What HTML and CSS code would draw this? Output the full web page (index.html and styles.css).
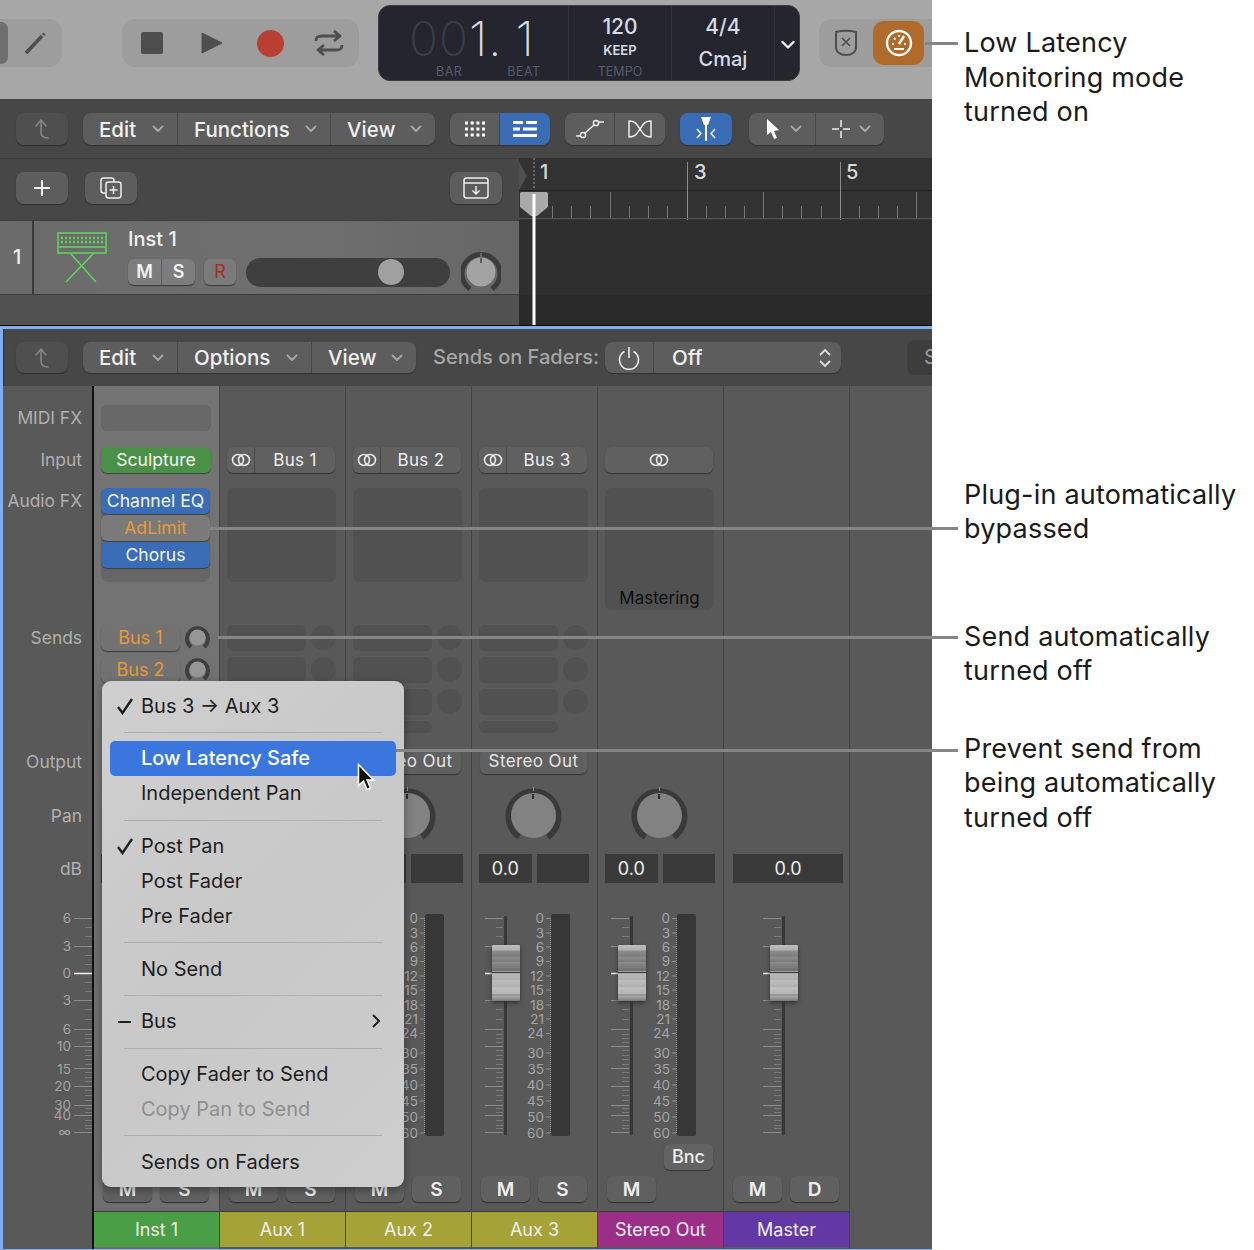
FILE: index.html
```html
<!DOCTYPE html>
<html>
	<head>
		<meta charset="UTF-8">
		<title>Low Latency Monitoring</title>
		<link rel="stylesheet" href="styles.css">
	</head>
	<body>
		<svg class="defs" width="0" height="0">
			<symbol id="chev" viewBox="0 0 12 8"><path d="M1.5 1.5 6 6l4.500-4.500" fill="none" stroke="currentColor" stroke-width="1.800" stroke-linecap="round" stroke-linejoin="round"/></symbol>
			<symbol id="back" viewBox="0 0 20 24"><path d="M4 9 9 3l5 6M9 3v12c0 4 3 6 7 6" fill="none" stroke="currentColor" stroke-width="1.600" stroke-linecap="round" stroke-linejoin="round"/></symbol>
			<symbol id="link" viewBox="0 0 20 14"><circle cx="7" cy="7" r="5.500" fill="none" stroke="currentColor" stroke-width="1.500"/><circle cx="13" cy="7" r="5.500" fill="none" stroke="currentColor" stroke-width="1.500"/></symbol>
			<symbol id="knob" viewBox="0 0 57 57"><path d="M14.200 50A25 25 0 1 1 42.800 50" fill="none" stroke="#3a3a3a" stroke-width="6"/><circle cx="28.500" cy="28.500" r="22.500" fill="#828282"/><path d="M28.500 0v4" stroke="#5fb35f" stroke-width="1"/><path d="M28 7v5" stroke="#111" stroke-width="1.500"/></symbol>
			<symbol id="sendknob" viewBox="0 0 25 25"><path d="M6 22A10.500 10.500 0 1 1 19 22" fill="none" stroke="#3f3f3f" stroke-width="4"/><circle cx="12.500" cy="12.500" r="8" fill="#969696"/></symbol>
			<symbol id="ticks" viewBox="0 0 18 225">
				<path d="M0 4.500h18M0 32.500h18M0 86.500h18M0 115.500h18M0 132.500h18M0 154.500h18M0 172.500h18M0 191.500h18M0 201.500h18M0 218.500h18" stroke="#8c8c8c" fill="none"/>
				<path d="M0 59.500h18" stroke="#f2f2f2" stroke-width="1.500" fill="none"/>
				<path d="M11 13.500h7M11 22.500h7M11 41.500h7M11 50.500h7M11 68.500h7M11 77.500h7M11 95.500h7M11 105.500h7M11 120.500h7M11 124.500h7M11 128.500h7M11 136.500h7M11 141.500h7M11 145.500h7M11 150.500h7M11 158.500h7M11 163.500h7M11 167.500h7M11 176.500h7M11 181.500h7M11 186.500h7M11 194.500h7M11 198.500h7M11 206.500h7M11 211.500h7M11 214.500h7" stroke="#7a7a7a" fill="none"/>
			</symbol>
			<symbol id="check" viewBox="0 0 18 18"><path d="M2 10l4.500 6L16 2" fill="none" stroke="#1e1e1e" stroke-width="2.400"/></symbol>
		</svg>

		<div class="shot">
			<div class="app">
				<!-- transport -->
				<div class="transport">
					<div class="tgroup tools">
						<div class="tool-on"></div>
						<svg class="pencil" width="24" height="24" viewBox="0 0 24 24"><path d="M3 22 19 5" stroke="#4e4e4e" stroke-width="3.500" fill="none"/><path d="M20 4l1.500-1.500" stroke="#4e4e4e" stroke-width="3" fill="none"/></svg>
					</div>
					<div class="tgroup controls">
						<div class="stop"></div>
						<svg class="play" width="22" height="24" viewBox="0 0 22 24"><path d="M1 2v20l20-10z" fill="#4e4e4e" stroke="#4e4e4e" stroke-linejoin="round"/></svg>
						<div class="rec"></div>
						<svg class="loop" width="30" height="26" viewBox="0 0 30 26"><path d="M2 11c0-4 2-5 6-5h16M20 1l6 5-6 5M28 15c0 4-2 5-6 5H6M10 15l-6 5 6 5" fill="none" stroke="#4e4e4e" stroke-width="2.800" stroke-linejoin="round"/></svg>
					</div>
					<div class="lcd">
						<div class="lcd-pos">
							<div class="digits"><span class="dim">00</span><span>1.</span><span class="beat">1</span></div>
							<div class="lcd-labels"><span>BAR</span><span>BEAT</span></div>
						</div>
						<div class="lcd-tempo">
							<span class="big">120</span>
							<span class="keep">KEEP</span>
							<span class="cap-label">TEMPO</span>
						</div>
						<div class="lcd-sign">
							<span class="big">4/4</span>
							<span class="key">Cmaj</span>
						</div>
						<svg class="lcd-chev" width="16" height="10"><use href="#chev"/></svg>
					</div>
					<div class="tgroup modes">
						<svg class="shield" width="26" height="28" viewBox="0 0 26 28"><path d="M3 3c6-1.500 14-1.500 20 0v15c0 5-4 8-10 8S3 23 3 18z" fill="none" stroke="#4e4e4e" stroke-width="2"/><path d="M9 9l8 8M17 9l-8 8" stroke="#4e4e4e" stroke-width="1.600"/></svg>
						<div class="gauge-btn">
							<svg width="28" height="28" viewBox="0 0 28 28"><circle cx="14" cy="14" r="12" fill="none" stroke="#fff" stroke-width="2.400"/><path d="M14 15 19 7" stroke="#fff" stroke-width="2.400"/><path d="M7 15h2M9 9l1.500 1.500M14 6v2M21 15h-2M9 20h10" stroke="#fff" stroke-width="1.800"/></svg>
						</div>
					</div>
				</div>

				<!-- tracks toolbar -->
				<div class="toolbar">
					<div class="btn ghost w52"><svg width="20" height="24"><use href="#back"/></svg></div>
					<div class="seg">
						<div class="seg-item w95">Edit<svg class="chev" width="12" height="8"><use href="#chev"/></svg></div>
						<div class="seg-item w153">Functions<svg class="chev" width="12" height="8"><use href="#chev"/></svg></div>
						<div class="seg-item w104">View<svg class="chev" width="12" height="8"><use href="#chev"/></svg></div>
					</div>
					<div class="seg">
						<div class="seg-icon w50"><svg width="22" height="16" viewBox="0 0 22 16"><path d="M1 2h20M1 8h20M1 14h20" stroke="#fff" stroke-width="3" stroke-dasharray="3 2.700"/></svg></div>
						<div class="seg-icon w50 active"><svg width="24" height="18" viewBox="0 0 24 18"><path d="M0 2.500h10M13 2.500h11M0 9h7M10 9h14M0 15.500h24" stroke="#fff" stroke-width="3.200"/></svg></div>
					</div>
					<div class="seg">
						<div class="seg-icon w50"><svg width="28" height="22" viewBox="0 0 28 22"><circle cx="7" cy="17" r="2.600" fill="none" stroke="#eee" stroke-width="1.500"/><circle cx="20" cy="5" r="2.600" fill="none" stroke="#eee" stroke-width="1.500"/><path d="M0 18h4.500M9 15l9-8M23 4h5" stroke="#eee" stroke-width="1.500"/></svg></div>
						<div class="seg-icon w50"><svg width="26" height="20" viewBox="0 0 26 20"><path d="M2 2c6 0 7 2 11 8s5 8 11 8V2c-6 0-7 2-11 8s-5 8-11 8z" fill="none" stroke="#eee" stroke-width="1.500" stroke-linejoin="round"/></svg></div>
					</div>
					<div class="seg single active w52">
						<svg width="24" height="26" viewBox="0 0 24 26"><path d="M7 1h10l-3 8h-1v16h-2V9h-1z" fill="#fff"/><path d="M3 13l4 4.500-4 4.500M21 13l-4 4.500 4 4.500" fill="none" stroke="#fff" stroke-width="1.400"/></svg>
					</div>
					<div class="seg last">
						<div class="seg-item w67"><svg width="16" height="22" viewBox="0 0 16 22"><path d="M2 1v16l4-3 3 7 3-1-3-7 5-1z" fill="#fff"/></svg><svg class="chev" width="12" height="8"><use href="#chev"/></svg></div>
						<div class="seg-item w68"><svg width="18" height="18" viewBox="0 0 18 18"><path d="M9 0v7M9 11v7M0 9h7M11 9h7" stroke="#eee" stroke-width="1.500"/></svg><svg class="chev" width="12" height="8"><use href="#chev"/></svg></div>
					</div>
				</div>

				<div class="arrange">
					<div class="arr-left">
						<div class="global-bar">
							<div class="btn w52"><svg width="18" height="18" viewBox="0 0 18 18"><path d="M9 1v16M1 9h16" stroke="#eee" stroke-width="2"/></svg></div>
							<div class="btn w52"><svg width="24" height="24" viewBox="0 0 24 24"><rect x="2" y="2" width="13" height="15" rx="2.500" fill="none" stroke="#eee" stroke-width="1.500"/><rect x="7" y="6" width="15" height="16" rx="2.500" fill="#5f5f5f" stroke="#eee" stroke-width="1.500"/><path d="M14.500 10v8M10.500 14h8" stroke="#eee" stroke-width="1.500"/></svg></div>
							<div class="btn w52 end"><svg width="26" height="22" viewBox="0 0 26 22"><rect x="1" y="1" width="24" height="20" rx="2.500" fill="none" stroke="#eee" stroke-width="1.500"/><path d="M1 6h24M13 9v8M9.500 13.500 13 17l3.500-3.500" fill="none" stroke="#eee" stroke-width="1.500"/></svg></div>
						</div>
						<div class="track-row">
							<div class="track-num">1</div>
							<svg class="track-icon" width="50" height="52" viewBox="0 0 50 52">
								<rect x="1" y="1" width="48" height="20" fill="none" stroke="#62d65c" stroke-width="1.500"/>
								<path d="M4 6h42M4 10h42" stroke="#62d65c" stroke-width="2.500" stroke-dasharray="2 2"/>
								<path d="M2 15h46" stroke="#62d65c" stroke-width="1.500"/>
								<path d="M14 22 39 50M36 22 9 50" stroke="#62d65c" stroke-width="1.500"/>
							</svg>
							<div class="track-main">
								<div class="track-name">Inst 1</div>
								<div class="track-controls">
									<div class="ms-pair"><span>M</span><span>S</span></div>
									<div class="r-btn">R</div>
									<div class="slider"><div class="thumb"></div></div>
									<svg class="track-knob" width="40" height="40" viewBox="0 0 40 40"><path d="M9 37A19 19 0 1 1 31 37" fill="none" stroke="#3c3c3c" stroke-width="5"/><circle cx="20" cy="20" r="14.500" fill="#a3a3a3"/><path d="M20 1v4" stroke="#5fb35f"/><path d="M20 6v5" stroke="#111"/></svg>
								</div>
							</div>
						</div>
						<div class="track-empty"></div>
					</div>
					<div class="arr-right">
						<svg class="ruler" width="413" height="62" viewBox="0 0 413 62">
							<path d="M0 4l8 14-8 14z" fill="#505050"/>
							<path d="M15 0v32" stroke="#999" stroke-dasharray="2 2"/>
							<path d="M0 32.500h413" stroke="#222"/>
							<path d="M168.500 4v58M321.500 4v58" stroke="#8c8c8c"/>
							<path d="M33.500 48v13M52.500 48v13M71.500 48v13M91.500 34v27M110.500 48v13M129.500 48v13M148.500 48v13M187.500 48v13M206.500 48v13M225.500 48v13M244.500 34v27M263.500 48v13M282.500 48v13M302.500 48v13M340.500 48v13M359.500 48v13M378.500 48v13M397.500 34v27" stroke="#777"/>
							<path d="M0 60.500h413" stroke="#555"/>
							<text class="bar-no" x="21" y="21">1</text>
							<text class="bar-no" x="175" y="21">3</text>
							<text class="bar-no" x="327" y="21">5</text>
						</svg>
						<div class="lane"></div>
						<div class="lane-end"></div>
					</div>
					<svg class="playhead" width="30" height="135" viewBox="0 0 30 135"><path d="M3 2h24c2 0 2 1 2 2v13L18 26h-6L1 17V4c0-1 0-2 2-2z" fill="#a9a9a9"/><rect x="13.500" y="4" width="3" height="131" fill="#fff"/></svg>
				</div>

				<!-- mixer -->
				<div class="mixer">
					<div class="toolbar mix-bar">
						<div class="btn ghost w52"><svg width="20" height="24"><use href="#back"/></svg></div>
						<div class="seg">
							<div class="seg-item w95">Edit<svg class="chev" width="12" height="8"><use href="#chev"/></svg></div>
							<div class="seg-item w134">Options<svg class="chev" width="12" height="8"><use href="#chev"/></svg></div>
							<div class="seg-item w104">View<svg class="chev" width="12" height="8"><use href="#chev"/></svg></div>
						</div>
						<div class="sof-label">Sends on Faders:</div>
						<div class="seg sof">
							<div class="seg-icon w49"><svg width="22" height="24" viewBox="0 0 22 24"><path d="M6.500 5.500a9.500 9.500 0 1 0 9 0M11 1v11" fill="none" stroke="#eee" stroke-width="1.600"/></svg></div>
							<div class="seg-item w187 off-select">Off<svg width="14" height="20" viewBox="0 0 14 20"><path d="M2 7l5-5 5 5M2 13l5 5 5-5" fill="none" stroke="#ddd" stroke-width="1.800"/></svg></div>
						</div>
						<div class="dark-btn">S</div>
					</div>
					<div class="mix-body">
						<div class="labels">
							<div class="lab r-midi">MIDI FX</div>
							<div class="lab r-input">Input</div>
							<div class="lab r-fx">Audio FX</div>
							<div class="lab r-sends">Sends</div>
							<div class="lab r-output">Output</div>
							<div class="lab r-pan">Pan</div>
							<div class="lab r-db">dB</div>
							<svg class="r-fader scale-left" width="89" height="232" viewBox="0 0 89 232">
								<use href="#ticks" x="71" width="18" height="225"/>
								<g class="scale-text" text-anchor="end">
									<text x="68" y="9">6</text><text x="68" y="37">3</text><text x="68" y="64">0</text><text x="68" y="91">3</text><text x="68" y="120">6</text><text x="68" y="137">10</text><text x="68" y="160">15</text><text x="68" y="177">20</text><text x="68" y="196">30</text><text x="68" y="206">40</text><text x="68" y="223">∞</text>
								</g>
							</svg>
						</div>

						<div class="strip selected">
							<div class="slot r-midi"></div>
							<div class="plug green r-input">Sculpture</div>
							<div class="fx-panel short r-fx">
								<div class="plug blue">Channel EQ</div>
								<div class="plug bypass">AdLimit</div>
								<div class="plug blue">Chorus</div>
							</div>
							<div class="sends r-sends">
								<div class="send">Bus 1</div><svg class="sk" width="25" height="25"><use href="#sendknob"/></svg>
								<div class="send">Bus 2</div><svg class="sk" width="25" height="25"><use href="#sendknob"/></svg>
							</div>
							<div class="db r-db"><div></div><div></div></div>
							<div class="ms r-ms"><div class="btn">M</div><div class="btn">S</div></div>
							<div class="name inst r-name">Inst 1</div>
						</div>

						<div class="strip">
							<div class="bus r-input"><span class="bus-link"><svg width="20" height="14"><use href="#link"/></svg></span><span class="bus-name">Bus 1</span></div>
							<div class="fx-panel short r-fx"></div>
							<div class="sends dim r-sends"><i></i><b></b><i></i><b></b><i></i><b></b><i class="tiny"></i></div>
							<div class="ms r-ms"><div class="btn">M</div><div class="btn">S</div></div>
							<div class="name aux r-name">Aux 1</div>
						</div>

						<div class="strip">
							<div class="bus r-input"><span class="bus-link"><svg width="20" height="14"><use href="#link"/></svg></span><span class="bus-name">Bus 2</span></div>
							<div class="fx-panel short r-fx"></div>
							<div class="sends dim r-sends"><i></i><b></b><i></i><b></b><i></i><b></b><i class="tiny"></i></div>
							<div class="output r-output">Stereo Out</div>
							<svg class="pan r-pan" width="57" height="57"><use href="#knob"/></svg>
							<div class="db r-db"><div></div><div></div></div>
							<div class="r-fader faders">
								<div class="fader"><svg width="18" height="225"><use href="#ticks"/></svg><div class="track"></div><div class="fcap"></div></div>
								<svg class="meter-scale" width="44" height="232" viewBox="0 0 44 232">
									<path d="M39 4.500h4M39 19h4M39 33h4M39 47.500h4M39 62h4M39 76h4M39 91h4M39 105h4M39 119.500h4M39 139h4M39 155h4M39 171h4M39 187h4M39 203h4M39 219h4" stroke="#8c8c8c"/><path d="M43.500 4v215" stroke="#8c8c8c" stroke-dasharray="1 1"/>
									<g class="scale-text" text-anchor="end"><text x="37" y="9">0</text><text x="37" y="24">3</text><text x="37" y="38">6</text><text x="37" y="52">9</text><text x="37" y="67">12</text><text x="37" y="81">15</text><text x="37" y="96">18</text><text x="37" y="110">21</text><text x="37" y="124">24</text><text x="37" y="144">30</text><text x="37" y="160">35</text><text x="37" y="176">40</text><text x="37" y="192">45</text><text x="37" y="208">50</text><text x="37" y="224">60</text></g>
								</svg>
								<div class="meter"></div>
							</div>
							<div class="ms r-ms"><div class="btn">M</div><div class="btn strong">S</div></div>
							<div class="name aux r-name">Aux 2</div>
						</div>

						<div class="strip">
							<div class="bus r-input"><span class="bus-link"><svg width="20" height="14"><use href="#link"/></svg></span><span class="bus-name">Bus 3</span></div>
							<div class="fx-panel short r-fx"></div>
							<div class="sends dim r-sends"><i></i><b></b><i></i><b></b><i></i><b></b><i class="tiny"></i></div>
							<div class="output r-output">Stereo Out</div>
							<svg class="pan r-pan" width="57" height="57"><use href="#knob"/></svg>
							<div class="db r-db"><div>0.0</div><div></div></div>
							<div class="r-fader faders">
								<div class="fader"><svg width="18" height="225"><use href="#ticks"/></svg><div class="track"></div><div class="fcap"></div></div>
								<svg class="meter-scale" width="44" height="232" viewBox="0 0 44 232">
									<path d="M39 4.500h4M39 19h4M39 33h4M39 47.500h4M39 62h4M39 76h4M39 91h4M39 105h4M39 119.500h4M39 139h4M39 155h4M39 171h4M39 187h4M39 203h4M39 219h4" stroke="#8c8c8c"/><path d="M43.500 4v215" stroke="#8c8c8c" stroke-dasharray="1 1"/>
									<g class="scale-text" text-anchor="end"><text x="37" y="9">0</text><text x="37" y="24">3</text><text x="37" y="38">6</text><text x="37" y="52">9</text><text x="37" y="67">12</text><text x="37" y="81">15</text><text x="37" y="96">18</text><text x="37" y="110">21</text><text x="37" y="124">24</text><text x="37" y="144">30</text><text x="37" y="160">35</text><text x="37" y="176">40</text><text x="37" y="192">45</text><text x="37" y="208">50</text><text x="37" y="224">60</text></g>
								</svg>
								<div class="meter"></div>
							</div>
							<div class="ms r-ms"><div class="btn strong">M</div><div class="btn strong">S</div></div>
							<div class="name aux r-name">Aux 3</div>
						</div>

						<div class="strip">
							<div class="bus solo r-input"><svg width="20" height="14"><use href="#link"/></svg></div>
							<div class="fx-panel r-fx"><div class="master-fx">Mastering</div></div>
							<svg class="pan r-pan" width="57" height="57"><use href="#knob"/></svg>
							<div class="db r-db"><div>0.0</div><div></div></div>
							<div class="r-fader faders">
								<div class="fader"><svg width="18" height="225"><use href="#ticks"/></svg><div class="track"></div><div class="fcap"></div></div>
								<svg class="meter-scale" width="44" height="232" viewBox="0 0 44 232">
									<path d="M39 4.500h4M39 19h4M39 33h4M39 47.500h4M39 62h4M39 76h4M39 91h4M39 105h4M39 119.500h4M39 139h4M39 155h4M39 171h4M39 187h4M39 203h4M39 219h4" stroke="#8c8c8c"/><path d="M43.500 4v215" stroke="#8c8c8c" stroke-dasharray="1 1"/>
									<g class="scale-text" text-anchor="end"><text x="37" y="9">0</text><text x="37" y="24">3</text><text x="37" y="38">6</text><text x="37" y="52">9</text><text x="37" y="67">12</text><text x="37" y="81">15</text><text x="37" y="96">18</text><text x="37" y="110">21</text><text x="37" y="124">24</text><text x="37" y="144">30</text><text x="37" y="160">35</text><text x="37" y="176">40</text><text x="37" y="192">45</text><text x="37" y="208">50</text><text x="37" y="224">60</text></g>
								</svg>
								<div class="meter"></div>
							</div>
							<div class="bnc r-bnc">Bnc</div>
							<div class="ms r-ms"><div class="btn strong">M</div></div>
							<div class="name stereo r-name">Stereo Out</div>
						</div>

						<div class="strip">
							<div class="db wide r-db"><div>0.0</div></div>
							<div class="r-fader faders solo">
								<div class="fader"><svg width="18" height="225"><use href="#ticks"/></svg><div class="track"></div><div class="fcap"></div></div>
							</div>
							<div class="ms r-ms"><div class="btn strong">M</div><div class="btn strong">D</div></div>
							<div class="name master r-name">Master</div>
						</div>
						<div class="mix-rest"></div>
					</div>
				</div>
			</div>

			<!-- popup menu -->
			<div class="menu">
				<div class="mi"><svg class="mark" width="18" height="18"><use href="#check"/></svg>Bus 3 → Aux 3</div>
				<div class="sep"></div>
				<div class="mi hot">Low Latency Safe</div>
				<div class="mi">Independent Pan</div>
				<div class="sep"></div>
				<div class="mi"><svg class="mark" width="18" height="18"><use href="#check"/></svg>Post Pan</div>
				<div class="mi">Post Fader</div>
				<div class="mi">Pre Fader</div>
				<div class="sep"></div>
				<div class="mi">No Send</div>
				<div class="sep"></div>
				<div class="mi"><span class="dash"></span>Bus<svg class="sub" width="10" height="16" viewBox="0 0 10 16"><path d="M2 2l6 6-6 6" fill="none" stroke="#1e1e1e" stroke-width="2"/></svg></div>
				<div class="sep"></div>
				<div class="mi">Copy Fader to Send</div>
				<div class="mi off">Copy Pan to Send</div>
				<div class="sep"></div>
				<div class="mi">Sends on Faders</div>
				<svg class="cursor" width="20" height="30" viewBox="0 0 20 30"><path d="M1.500 1.500v21l5-4.500 3.500 8.500 3.500-1.500-3.500-8h6.500z" fill="#111" stroke="#fff" stroke-width="1.500"/></svg>
			</div>

			<!-- callouts -->
			<div class="lead lead-a"></div>
			<div class="lead lead-b"></div>
			<div class="lead lead-c"></div>
			<div class="lead lead-d"></div>
			<div class="notes">
				<p class="note-a">Low Latency<br>Monitoring mode<br>turned on</p>
				<p class="note-b">Plug-in automatically<br>bypassed</p>
				<p class="note-c">Send automatically<br>turned off</p>
				<p class="note-d">Prevent send from<br>being automatically<br>turned off</p>
			</div>
		</div>
	</body>
</html>
```

FILE: styles.css
```css
*{
	box-sizing: border-box;
}
body{
	margin: 0;
	background: #fff;
	font-family: Inter, "Liberation Sans", sans-serif;
}
.defs{
	position: absolute;
}
.shot{
	width: 1254px;
	height: 1250px;
	position: relative;
	display: flex;
	overflow: hidden;
}
.app{
	width: 932px;
	height: 1250px;
	flex: none;
	display: flex;
	flex-direction: column;
	overflow: hidden;
}

/* transport */
.transport{
	height: 99px;
	background: #a7a7a7;
	position: relative;
	display: flex;
	align-items: flex-start;
	flex: none;
}
.tgroup{
	height: 48px;
	margin-top: 19px;
	background: #9d9d9d;
	border-radius: 13px;
	display: flex;
	align-items: center;
}
.tools{
	width: 62px;
	border-radius: 0 13px 13px 0;
}
.tool-on{
	width: 8px;
	height: 42px;
	background: #6e6e6e;
	border-radius: 0 7px 7px 0;
}
.pencil{
	margin-left: 15px;
}
.controls{
	width: 237px;
	margin-left: 60px;
	padding-left: 19px;
}
.stop{
	width: 22px;
	height: 22px;
	background: #4e4e4e;
	border-radius: 2px;
}
.play{
	margin-left: 38px;
}
.rec{
	width: 27px;
	height: 27px;
	margin-left: 34px;
	border-radius: 50%;
	background: #b93f32;
}
.loop{
	margin-left: 30px;
}
.lcd{
	width: 422px;
	height: 76px;
	margin: 5px 0 0 19px;
	background: #24252f;
	border: 1px solid #3c3c42;
	border-radius: 12px;
	display: flex;
	color: #d5dbe5;
	position: relative;
}
.lcd-pos{
	width: 190px;
	border-right: 1px solid #2f313c;
	position: relative;
	padding-left: 30px;
}
.digits{
	font-size: 48px;
	font-weight: 200;
	line-height: 50px;
	height: 50px;
	margin-top: 8px;
	white-space: nowrap;
	letter-spacing: 1px;
}
.digits .dim{
	color: #3a3d49;
}
.digits .beat{
	margin-left: 13px;
}
.lcd-labels{
	display: flex;
	font-size: 12.500px;
	line-height: 14px;
	margin-top: 1px;
	color: #565c6c;
	padding-left: 27px;
	gap: 45px;
	letter-spacing: .5px;
}
.lcd-tempo,.lcd-sign{
	width: 103px;
	display: flex;
	flex-direction: column;
	align-items: center;
	border-right: 1px solid #2f313c;
}
.big{
	font-size: 21px;
	font-weight: 500;
	line-height: 24px;
	margin-top: 9px;
}
.keep{
	font-size: 13px;
	font-weight: 600;
	line-height: 20px;
	margin-top: 1px;
}
.cap-label{
	font-size: 12.500px;
	color: #565c6c;
	line-height: 20px;
	margin-top: 2px;
}
.key{
	font-size: 20px;
	font-weight: 500;
	margin-top: 8px;
}
.lcd-chev{
	color: #eee;
	margin: 34px 0 0 5px;
}
.modes{
	margin-left: 19px;
	flex: 1;
	border-radius: 13px 0 0 13px;
	padding-left: 14px;
}
.gauge-btn{
	width: 51px;
	height: 44px;
	margin-left: 14px;
	background: #b06a2b;
	border-radius: 11px;
	display: flex;
	align-items: center;
	justify-content: center;
}

/* toolbars */
.toolbar{
	height: 59px;
	flex: none;
	background: #474747;
	padding: 14px 0 0 16px;
	display: flex;
	gap: 15px;
	align-items: flex-start;
	overflow: hidden;
}
.btn{
	height: 32px;
	flex: none;
	background: #5d5d5d;
	border-radius: 8px;
	box-shadow: 0 1px 1px #2f2f2f;
	display: flex;
	align-items: center;
	justify-content: center;
	color: #eee;
}
.btn.ghost{
	background: #4f4f4f;
	color: #858585;
}
.w52{
	width: 52px;
}
.seg{
	height: 32px;
	flex: none;
	display: flex;
	background: #5d5d5d;
	border-radius: 8px;
	box-shadow: 0 1px 1px #2f2f2f;
	overflow: hidden;
	color: #f0f0f0;
	font-size: 20.500px;
	font-weight: 500;
}
.seg-item{
	flex: none;
	display: flex;
	align-items: center;
	justify-content: space-between;
	padding: 0 13px 0 16px;
	border-right: 1px solid #474747;
}
.seg-item:last-child{
	border-right: 0;
}
.off-select{
	padding: 0 9px 0 18px;
}
.seg-icon{
	flex: none;
	display: flex;
	align-items: center;
	justify-content: center;
	border-right: 1px solid #474747;
}
.seg-icon:last-child{
	border-right: 0;
}
.chev{
	color: #a8a8a8;
}
.active{
	background: #3a6db5;
}
.single{
	align-items: center;
	justify-content: center;
}
.last{
	margin-left: 2px;
}
.w49{width: 49px;}
.w50{width: 50px;}
.w67{width: 67px;}
.w68{width: 68px;}
.w95{width: 95px;}
.w104{width: 104px;}
.w134{width: 134px;}
.w153{width: 153px;}
.w187{width: 187px;}

/* tracks area */
.arrange{
	height: 168px;
	flex: none;
	display: flex;
	position: relative;
	border-bottom: 1px solid #0c0c0c;
}
.arr-left{
	width: 519px;
	flex: none;
	display: flex;
	flex-direction: column;
}
.arr-right{
	flex: 1;
	display: flex;
	flex-direction: column;
	background: #333;
}
.ruler{
	display: block;
	flex: none;
}
.bar-no{
	font-size: 20px;
	font-weight: 500;
	fill: #d8d8d8;
}
.lane{
	height: 75px;
	background: #2f2f2f;
}
.lane-end{
	flex: 1;
	background: #2a2a2a;
}
.playhead{
	position: absolute;
	left: 519px;
	top: 32px;
}
.global-bar{
	height: 62px;
	flex: none;
	background: #474747;
	border-top: 1px solid #3f3f3f;
	padding: 13px 17px 0 16px;
	display: flex;
	gap: 17px;
}
.end{
	margin-left: auto;
}
.track-row{
	height: 75px;
	flex: none;
	background: linear-gradient(90deg,#6b6b6b,#6f6f6f 60%,#666);
	border-top: 1px solid #3e3e3e;
	border-bottom: 1px solid #3e3e3e;
	display: flex;
}
.track-num{
	width: 34px;
	border-right: 2px solid #3a3a3a;
	color: #eee;
	font-size: 20px;
	font-weight: 500;
	line-height: 72px;
	padding-left: 13px;
	flex: none;
}
.track-icon{
	margin: 11px 0 0 23px;
	flex: none;
}
.track-main{
	margin-left: 21px;
	flex: 1;
}
.track-name{
	color: #f0f0f0;
	font-size: 20px;
	font-weight: 500;
	line-height: 24px;
	margin-top: 6px;
}
.track-controls{
	display: flex;
	align-items: center;
	margin-top: 1px;
}
.ms-pair{
	width: 67px;
	height: 26px;
	display: flex;
	background: #7d7d7d;
	border-radius: 6px;
	box-shadow: 0 1px 1px #3a3a3a;
	flex: none;
	color: #f2f2f2;
	font-size: 18px;
	font-weight: 600;
}
.ms-pair span{
	flex: 1;
	text-align: center;
	line-height: 25px;
}
.ms-pair span:first-child{
	border-right: 1px solid #606060;
}
.r-btn{
	width: 32px;
	height: 26px;
	margin-left: 9px;
	background: #7b7b7b;
	border-radius: 6px;
	box-shadow: 0 1px 1px #3a3a3a;
	color: #a82a20;
	font-size: 18px;
	text-align: center;
	line-height: 25px;
	flex: none;
}
.slider{
	width: 204px;
	height: 29px;
	margin-left: 10px;
	background: #3f3f3f;
	border-radius: 15px;
	display: flex;
	align-items: center;
	padding-left: 132px;
	flex: none;
}
.thumb{
	width: 26px;
	height: 26px;
	border-radius: 50%;
	background: #a0a0a0;
}
.track-knob{
	margin-left: 11px;
	flex: none;
}
.track-empty{
	flex: 1;
	background: #515151;
}

/* mixer */
.mixer{
	flex: 1;
	display: flex;
	flex-direction: column;
	border: solid #82aef0;
	border-width: 3px 0 3px 3px;
	min-height: 0;
}
.mix-bar{
	height: 57px;
	padding: 13px 0 0 12px;
	border-left: 1px solid #333;
}
.mix-bar .btn,.mix-bar .seg{
	height: 31px;
}
.sof-label{
	margin-left: 2px;
	color: #a6a6a6;
	font-size: 20px;
	font-weight: 500;
	line-height: 31px;
	white-space: nowrap;
	width: 167px;
	flex: none;
}
.sof{
	margin-left: -10px;
}
.dark-btn{
	width: 60px;
	height: 35px;
	margin: -2px 0 0 51px;
	background: #3d3d3d;
	border-radius: 8px;
	color: #999;
	font-size: 20px;
	line-height: 35px;
	padding-left: 17px;
	flex: none;
}
.mix-body{
	flex: 1;
	display: flex;
	background: #595959;
}
.labels,.strip{
	display: grid;
	grid-template-rows: 19px 26px 16px 26px 15px 122px 15px 108px 16px 26px 12px 57px 10px 29px 31px 222px 8px 26px 6px 26px 9px 1fr;
}
.labels{
	width: 91px;
	border-right: 2px solid #111;
	flex: none;
}
.lab{
	text-align: right;
	padding-right: 10px;
	color: #b0b0b0;
	font-size: 17.400px;
	line-height: 26px;
}
.lab.r-pan{
	line-height: 57px;
}
.lab.r-db{
	line-height: 29px;
}
.scale-left{
	overflow: visible;
}
.strip{
	width: 126px;
	flex: none;
	padding: 0 8px 0 7px;
	border-right: 1px solid #454545;
	position: relative;
}
.selected{
	background: linear-gradient(#747474,#6e6e6e);
}
.mix-rest{
	flex: 1;
}
.r-midi{grid-row: 2;}
.r-input{grid-row: 4;}
.r-fx{grid-row: 6;}
.r-sends{grid-row: 8;}
.r-output{grid-row: 10;}
.r-pan{grid-row: 12;}
.r-db{grid-row: 14;}
.r-fader{grid-row: 16;}
.r-bnc{grid-row: 18;}
.r-ms{grid-row: 20;}
.r-name{grid-row: 22;}

.slot{
	background: #686868;
	border-radius: 6px;
}
.plug{
	height: 26px;
	border-radius: 6px;
	color: #f4f4f4;
	font-size: 17.600px;
	text-align: center;
	line-height: 26px;
	box-shadow: 0 1px 1px #3e3e3e;
}
.green{
	background: #4a9147;
}
.blue{
	background: #3a6db5;
}
.bypass{
	background: #7a7a7a;
	color: #e59a3a;
}
.fx-panel{
	background: #515151;
	border-radius: 7px;
	display: flex;
	flex-direction: column;
	gap: 1px;
	width: 109px;
	position: relative;
}
.fx-panel.short{
	height: 94px;
}
.selected .fx-panel{
	background: #666;
}
.master-fx{
	position: absolute;
	bottom: -1px;
	width: 100%;
	text-align: center;
	color: #0e0e0e;
	font-size: 17px;
	line-height: 26px;
}
.bus{
	height: 26px;
	width: 108px;
	display: flex;
	background: #606060;
	border-radius: 6px;
	box-shadow: 0 1px 1px #333;
	color: #eee;
	font-size: 17px;
	letter-spacing: .3px;
	line-height: 26px;
}
.bus-link{
	width: 28px;
	border-right: 1px solid #474747;
	display: flex;
	align-items: center;
	justify-content: center;
	flex: none;
}
.bus-name{
	flex: 1;
	text-align: center;
}
.bus.solo{
	align-items: center;
	justify-content: center;
}
.sends{
	display: grid;
	grid-template-columns: 79px 25px;
	grid-auto-rows: 26px;
	gap: 6px 5px;
	align-content: start;
}
.send{
	background: #727272;
	border-radius: 6px;
	box-shadow: 0 1px 1px #3e3e3e;
	color: #e59a3a;
	font-size: 18px;
	text-align: center;
	line-height: 26px;
}
.sends i{
	background: #515151;
	border-radius: 6px;
}
.sends b{
	background: #515151;
	border-radius: 50%;
	height: 25px;
}
.sends i.tiny{
	height: 12px;
}
.output{
	width: 107px;
	margin-left: 1px;
	height: 25px;
	background: #606060;
	border-radius: 6px;
	box-shadow: 0 1px 1px #333;
	color: #e6e6e6;
	font-size: 17px;
	letter-spacing: .4px;
	text-align: center;
	line-height: 25px;
}
.pan{
	margin-left: 26px;
}
.db{
	display: flex;
	gap: 5px;
}
.db div{
	flex: 1;
	background: #3a3a3a;
	color: #eee;
	font-size: 18px;
	text-align: center;
	line-height: 29px;
}
.db.wide{
	margin: 0 -2px 0 2px;
}
.faders{
	display: flex;
	align-items: flex-start;
}
.faders.solo{
	padding-left: 32px;
}
.fader{
	width: 22px;
	margin-left: 6px;
	height: 222px;
	display: flex;
	position: relative;
	flex: none;
}
.faders.solo .fader{
	margin-left: 0;
}
.track{
	width: 3px;
	height: 219px;
	margin: 2px 0 0 1px;
	background: #373737;
	border-radius: 1px;
}
.fcap{
	position: absolute;
	left: 7px;
	top: 31px;
	width: 28px;
	height: 56px;
	background: linear-gradient(#bdbdbd 0,#b0b0b0 9%,#8a8a8a 11%,#7c7c7c 20%,#8c8c8c 21%,#7a7a7a 30%,#8a8a8a 31%,#7b7b7b 40%,#6f6f6f 46%,#d0d0d0 47%,#3a3a3a 48%,#3a3a3a 50%,#b8b8b8 51%,#aeaeae 62%,#bdbdbd 63%,#b0b0b0 75%,#c0c0c0 76%,#b4b4b4 87%,#8e8e8e 89%,#a8a8a8 92%,#777 100%);
	box-shadow: 0 2px 4px #333;
	border-radius: 1px;
}
.meter-scale{
	flex: none;
	display: block;
	overflow: visible;
}
.scale-text{
	font-size: 13.500px;
	fill: #a4a4a4;
}
.meter{
	width: 19px;
	height: 222px;
	background: #373737;
	border-radius: 2px;
	flex: none;
}
.bnc{
	width: 49px;
	margin-left: 59px;
	background: #636363;
	border-radius: 6px;
	box-shadow: 0 1px 1px #333;
	color: #eee;
	font-size: 18px;
	font-weight: 500;
	text-align: center;
	line-height: 26px;
}
.ms{
	display: flex;
	gap: 8px;
	padding: 0 2px;
}
.ms .btn{
	width: 49px;
	height: 26px;
	border-radius: 6px;
	font-size: 19px;
	font-weight: 600;
	background: #606060;
}
.name{
	margin: 0 -8px 2px -7px;
	color: #f0f0f0;
	font-size: 18px;
	text-align: center;
	line-height: 36px;
	border-top: 1px solid #3a3a3a;
	height: 36px;
}
.inst{background: #4a9e45;}
.aux{background: #a5a238;}
.stereo{background: #9b2e87;}
.master{background: #6238a5;}

/* popup */
.menu{
	position: absolute;
	left: 102px;
	top: 681px;
	width: 302px;
	height: 506px;
	padding: 7.500px 8px;
	background: linear-gradient(135deg,#cfcfcf,#c8c8c8 50%,#cdcdcd);
	border-radius: 9px;
	box-shadow: 0 3px 10px rgba(0,0,0,.35);
}
.mi{
	height: 35px;
	line-height: 35px;
	padding-left: 31px;
	color: #1e1e1e;
	font-size: 20px;
	position: relative;
}
.mi.hot{
	background: #3b76de;
	color: #fff;
	border-radius: 5px;
	font-weight: 500;
}
.mi.off{
	color: #8f8f8f;
}
.mark{
	position: absolute;
	left: 6px;
	top: 8px;
}
.dash{
	position: absolute;
	left: 8px;
	top: 17px;
	width: 13px;
	height: 2px;
	background: #1e1e1e;
}
.sub{
	position: absolute;
	right: 15px;
	top: 9px;
}
.sep{
	height: 1px;
	margin: 8.350px 14px;
	background: #aeaeae;
}
.cursor{
	position: absolute;
	left: 255px;
	top: 82px;
}

/* callouts */
.lead{
	position: absolute;
	height: 3px;
	background: #858585;
}
.lead-a{
	left: 925px;
	top: 42px;
	width: 33px;
}
.lead-b{
	left: 210px;
	top: 527px;
	width: 748px;
}
.lead-c{
	left: 218px;
	top: 636px;
	width: 740px;
}
.lead-d{
	left: 396px;
	top: 749px;
	width: 562px;
}
.notes{
	margin-left: 32px;
	color: #1a1a1a;
	font-size: 27px;
	letter-spacing: .2px;
	line-height: 34.500px;
	white-space: nowrap;
}
.notes p{
	margin: 0;
}
.note-a{
	padding-top: 26px;
}
.notes .note-b{
	margin-top: 348px;
}
.notes .note-c{
	margin-top: 73px;
}
.notes .note-d{
	margin-top: 43px;
}
```
